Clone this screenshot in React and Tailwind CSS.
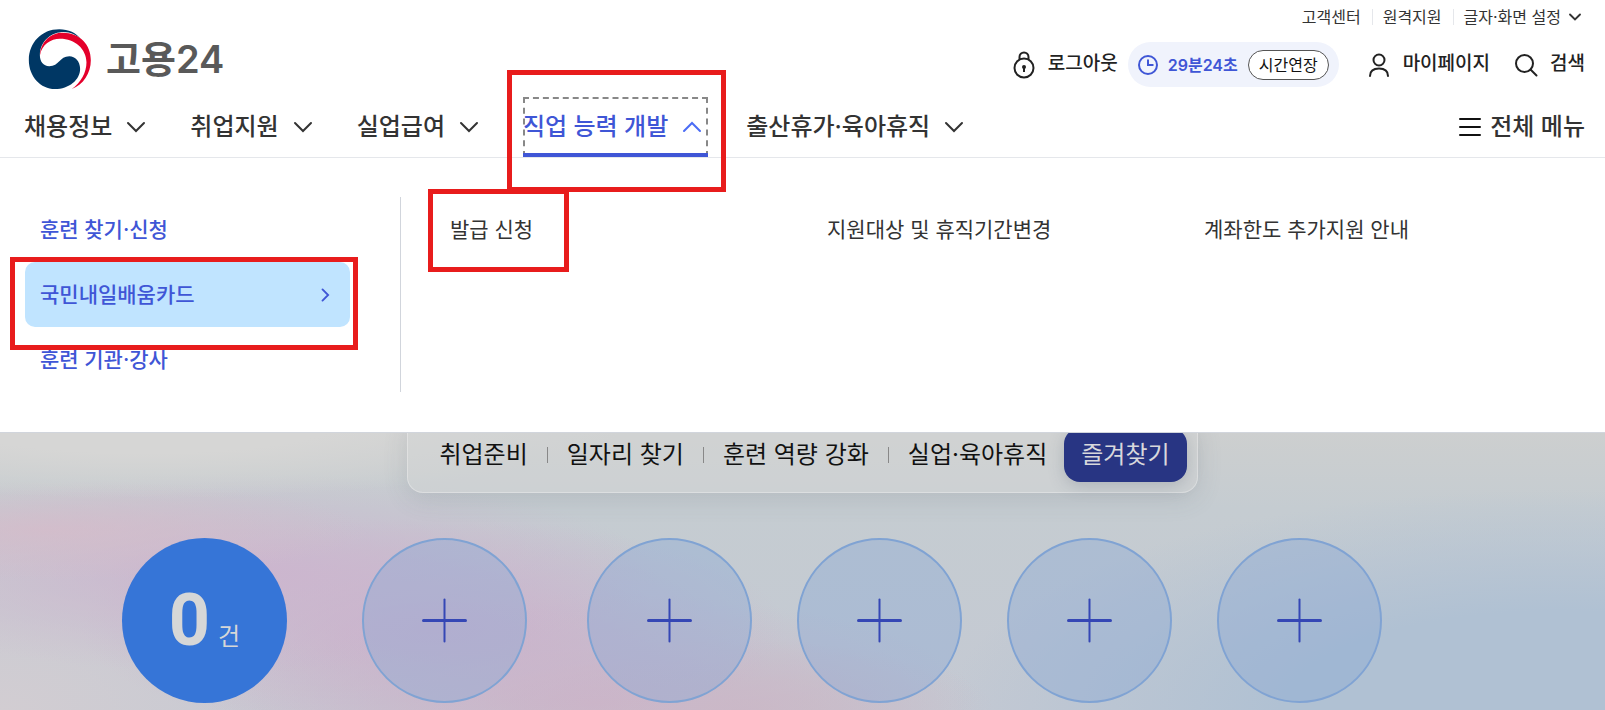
const utilLinks = ["고객센터", "원격지원"];

const mainMenus = [
    { label: "채용정보", open: false },
    { label: "취업지원", open: false },
    { label: "실업급여", open: false },
    { label: "직업 능력 개발", open: true },
    { label: "출산휴가·육아휴직", open: false },
];

const sideMenus = [
    { label: "훈련 찾기·신청", active: false },
    { label: "국민내일배움카드", active: true },
    { label: "훈련 기관·강사", active: false },
];

const subLinks = ["발급 신청", "지원대상 및 휴직기간변경", "계좌한도 추가지원 안내"];

const quickTabs = ["취업준비", "일자리 찾기", "훈련 역량 강화", "실업·육아휴직"];

function Logo() {
    return (
        <a href="#" className="flex items-start gap-[13px] pt-[18px]">
            <svg viewBox="22 26 196 188" className="w-[66px] h-[63px]" aria-hidden="true">
                <path
                    fill="#003764"
                    d="M60 108C60 62 98 38 130 38C152 38 172 48 185 62C168 40 145 30 118 30C65 30 27 70 27 122C27 170 62 208 105 208C147 208 180 180 180 148C180 125 165 110 148 110C118 110 118 140 88 140C70 140 60 125 60 108Z"
                />
                <path
                    fill="#e4002b"
                    d="M60 108C62 64 95 40 128 40C180 40 212 76 212 122C212 160 190 195 155 208C183 188 199 158 199 128C198 88 165 58 120 58C92 58 66 75 60 108Z"
                />
            </svg>
            <span className="text-[38px] leading-[62px] font-semibold text-[#595959]">고용24</span>
        </a>
    );
}

function Chevron({ className, d = "M8 12l8 8 8-8" }) {
    return (
        <svg viewBox="0 0 32 32" fill="none" stroke="currentColor" strokeWidth="2" strokeLinecap="round" className={className} aria-hidden="true">
            <path d={d} />
        </svg>
    );
}

function LockIcon() {
    return (
        <svg viewBox="0 0 24 30" fill="none" stroke="currentColor" strokeWidth="2" className="w-6 h-[30px]" aria-hidden="true">
            <circle cx="12" cy="18" r="9.500" />
            <path d="M7.500 10V7a4.500 4.500 0 0 1 9 0v3" />
            <circle cx="12" cy="17" r="2" fill="currentColor" stroke="none" />
            <path d="M12 17v5" />
        </svg>
    );
}

function UserIcon() {
    return (
        <svg viewBox="0 0 24 24" fill="none" stroke="currentColor" strokeWidth="2" strokeLinecap="round" className="w-6 h-6" aria-hidden="true">
            <circle cx="12" cy="7" r="5.500" />
            <path d="M3 23c0-5 3.500-7.500 9-7.500s9 2.500 9 7.500" />
        </svg>
    );
}

function SearchIcon() {
    return (
        <svg viewBox="0 0 24 24" fill="none" stroke="currentColor" strokeWidth="2" strokeLinecap="round" className="w-6 h-6" aria-hidden="true">
            <circle cx="10.500" cy="10.500" r="8.500" />
            <path d="M16.500 16.500l6 6" />
        </svg>
    );
}

function ClockIcon() {
    return (
        <svg viewBox="0 0 20 20" fill="none" stroke="currentColor" strokeWidth="2" className="w-5 h-5" aria-hidden="true">
            <circle cx="10" cy="10" r="9" />
            <path d="M10 4.500V10h5.500" />
        </svg>
    );
}

function TopActions() {
    return (
        <div className="flex flex-col items-end">
            <div className="flex items-center h-[34px] text-[16px] text-[#333]">
                {utilLinks.map((label) => (
                    <a key={label} href="#" className="pr-[11px] mr-[10px] border-r border-gray-200 leading-4">
                        {label}
                    </a>
                ))}
                <button className="flex items-center gap-1">
                    글자·화면 설정
                    <Chevron className="w-5 h-5 stroke-3" />
                </button>
            </div>
            <div className="flex items-center mt-2 text-[19px] font-medium text-[#222]">
                <button className="flex items-center gap-3">
                    <LockIcon />
                    로그아웃
                </button>
                <div className="flex items-center gap-[10px] h-[45px] ml-[10px] px-[10px] rounded-full bg-[#f0f3fc] text-[#3f56d6]">
                    <ClockIcon />
                    <span className="text-[16px] font-semibold">29분24초</span>
                    <button className="h-[30px] px-[10px] rounded-full border border-[#555] bg-white text-[16px] font-normal text-[#111]">
                        시간연장
                    </button>
                </div>
                <a href="#" className="flex items-center gap-3 ml-7">
                    <UserIcon />
                    마이페이지
                </a>
                <button className="flex items-center gap-3 ml-6">
                    <SearchIcon />
                    검색
                </button>
            </div>
        </div>
    );
}

function MainNav() {
    return (
        <nav className="flex items-center justify-between mt-[10px] pl-6 pr-5 border-b border-gray-200 text-[24px] font-medium text-[#333]">
            <ul className="flex gap-[38px]">
                {mainMenus.map((menu) => (
                    <li key={menu.label}>
                        {menu.open ? (
                            <button className="relative flex items-center gap-2 h-[60px] text-[#3f56d6]" aria-expanded="true">
                                {menu.label}
                                <Chevron className="w-8 h-8 text-[#4b6cf5]" d="M8 20l8-8 8 8" />
                                <span className="absolute inset-0 border-2 border-b-0 border-dashed border-[#888]"></span>
                                <span className="absolute inset-x-0 bottom-0 h-1 bg-[#3f56d6]"></span>
                                {/* highlight box */}
                                <span className="absolute -left-4 -right-[18px] -top-[27px] -bottom-[35px] z-10 border-5 border-[#e81c1c]"></span>
                            </button>
                        ) : (
                            <button className="flex items-center gap-2 h-[60px]" aria-expanded="false">
                                {menu.label}
                                <Chevron className="w-8 h-8" />
                            </button>
                        )}
                    </li>
                ))}
            </ul>
            <button className="flex items-center gap-2">
                <svg viewBox="0 0 24 18" stroke="#111" strokeWidth="2" strokeLinecap="round" className="w-6 h-[18px]" aria-hidden="true">
                    <path d="M2 1h20M2 9h20M2 17h20" />
                </svg>
                전체 메뉴
            </button>
        </nav>
    );
}

function MegaMenu() {
    return (
        <div className="absolute top-full inset-x-0 flex pt-[39px] pb-10 pl-[25px] pr-6 bg-white border-b border-gray-300 text-[21px]">
            <ul className="w-[325px] font-medium text-[#3f56d6]">
                {sideMenus.map((menu) => (
                    <li key={menu.label}>
                        {menu.active ? (
                            <a href="#" className="relative flex items-center justify-between h-[65px] pl-[15px] pr-[15px] rounded-[10px] bg-[#c0e4ff]">
                                {menu.label}
                                <Chevron className="w-5 h-5 stroke-3" d="M12 7l9 9-9 9" />
                                <span className="absolute -left-[15px] -right-2 -top-[5px] -bottom-[23px] z-10 border-5 border-[#e81c1c]"></span>
                            </a>
                        ) : (
                            <a href="#" className="flex items-center h-[65px] pl-[15px]">
                                {menu.label}
                            </a>
                        )}
                    </li>
                ))}
            </ul>
            <ul className="grid grid-cols-3 items-start flex-1 ml-[50px] pl-[49px] border-l border-gray-300 text-[#333]">
                {subLinks.map((label, i) => (
                    <li key={label}>
                        <a href="#" className="relative inline-flex items-center h-[65px]">
                            {label}
                            {i === 0 && (
                                <span className="absolute -left-[22px] -right-9 -top-2 -bottom-[10px] border-5 border-[#e81c1c]"></span>
                            )}
                        </a>
                    </li>
                ))}
            </ul>
        </div>
    );
}

function QuickTabs() {
    return (
        <div className="flex items-center w-fit mx-auto h-[76px] pl-[31px] pr-[10px] rounded-2xl border border-white/30 bg-[#d3d6d5]/50 shadow-[0_6px_24px_rgba(90,100,110,0.16)] text-[24px] text-[#111]">
            {quickTabs.map((tab, i) => (
                <div key={tab} className="flex items-center">
                    {i > 0 && <span className="w-px h-4 mx-[19px] bg-[#888]"></span>}
                    <button>{tab}</button>
                </div>
            ))}
            <button className="h-[54px] ml-[17px] px-[17px] rounded-2xl bg-[#283583] text-[#d8d8dc] shadow-[0_4px_16px_rgba(80,90,110,0.25)]">
                즐겨찾기
            </button>
        </div>
    );
}

function AddCircle({ className = "" }) {
    return (
        <button
            aria-label="추가"
            className={`flex items-center justify-center shrink-0 w-[165px] h-[165px] rounded-full border-2 border-[#80a3d3] bg-[#8aa8d5]/40 ${className}`}
        >
            <svg viewBox="0 0 45 45" stroke="#3547b5" strokeLinecap="round" className="w-[45px] h-[45px]" aria-hidden="true">
                <path d="M1.500 22.500h42" strokeWidth="3" />
                <path d="M22.500 1.500v42" strokeWidth="2" />
            </svg>
        </button>
    );
}

export default function App() {
    return (
        <div className="font-[Inter,'Noto_Sans_CJK_KR',sans-serif] whitespace-nowrap overflow-hidden bg-white">
            <header className="relative z-10 bg-white">
                <div className="flex justify-between items-start pl-[27px] pr-5 h-[87px]">
                    <div className="pt-[10px]">
                        <Logo />
                    </div>
                    <TopActions />
                </div>
                <MainNav />
                <MegaMenu />
            </header>

            <main className="pt-[259px] pb-[7px] bg-[radial-gradient(ellipse_30%_75px_at_9%_265px,#d6d6d5_40%,transparent),radial-gradient(ellipse_20%_50px_at_3%_372px,#d5bccacc,transparent),radial-gradient(ellipse_26%_100px_at_15%_415px,#ccb5ce,transparent),radial-gradient(ellipse_22%_110px_at_27%_470px,#cbb1cb,transparent),radial-gradient(ellipse_24%_110px_at_37%_545px,#cbb6c8,transparent),radial-gradient(ellipse_16%_70px_at_46%_552px,#c9bcc6,transparent),radial-gradient(ellipse_24%_200px_at_0%_552px,#d2cdd2,transparent),radial-gradient(ellipse_38%_220px_at_97%_552px,#b0c1d3_45%,transparent),linear-gradient(180deg,#cdcfcf_275px,#c5ccd1_350px,#c4c9d3_552px)]">
                <QuickTabs />
                <div className="flex gap-[45px] mt-[45px] pl-[122px]">
                    <a href="#" className="flex items-baseline justify-center gap-2 shrink-0 w-[165px] h-[165px] rounded-full bg-[#3675d7] text-[#d6d7d7]">
                        <strong className="font-[Roboto,sans-serif] text-[72px] leading-[165px] font-bold">0</strong>
                        <span className="text-[24px]">건</span>
                    </a>
                    <AddCircle className="ml-[30px]" />
                    <AddCircle className="ml-[15px]" />
                    <AddCircle />
                    <AddCircle />
                    <AddCircle />
                </div>
            </main>
        </div>
    );
}
